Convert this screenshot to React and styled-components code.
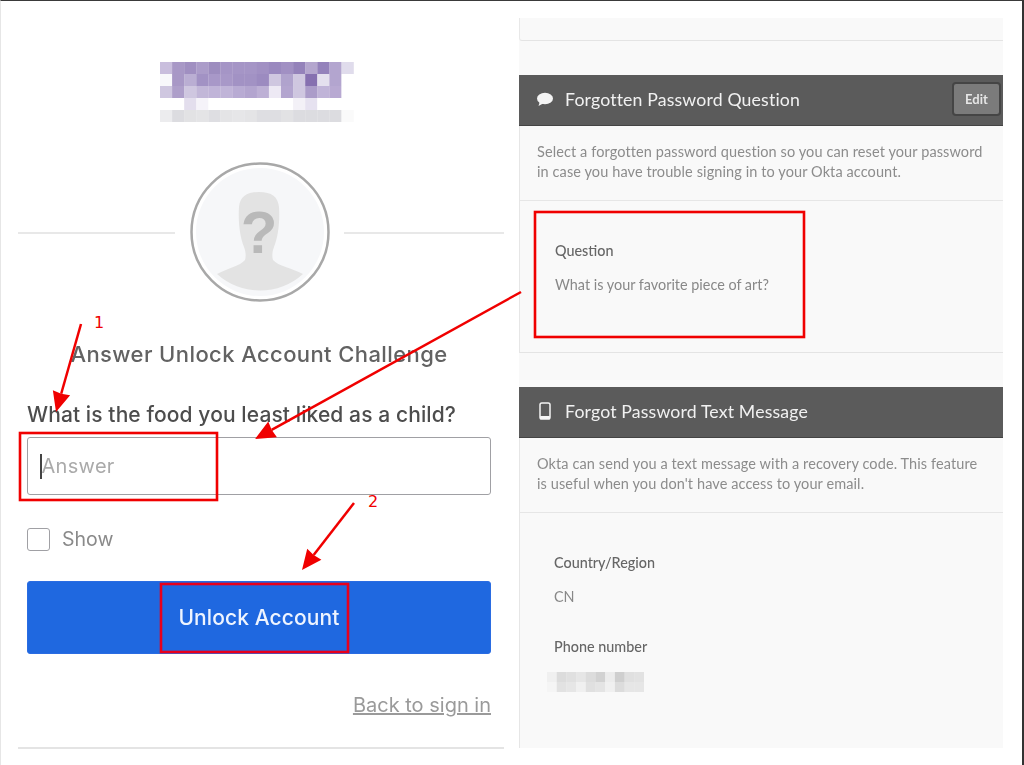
import React from "react";
import styled, { createGlobalStyle } from "styled-components";

const GlobalStyle = createGlobalStyle`
  html, body {
    margin: 0;
    padding: 0;
    background: #fff;
  }
  * {
    box-sizing: border-box;
  }
`;

const Page = styled.div`
  position: relative;
  width: 1024px;
  height: 765px;
  overflow: hidden;
  display: flex;
  background: #fff;
  border-top: 1px solid #3a3a3a;
  border-right: 2px solid #333;
  border-left: 1px solid #e6e6e6;
`;

const LeftColumn = styled.div`
  width: 518px;
  flex: none;
  padding: 0 15px 0 17px;
  display: flex;
  flex-direction: column;
  font-family: "Inter", "Liberation Sans", sans-serif;
  filter: blur(0.5px);
`;

const Logo = styled.svg`
  display: block;
  width: 194px;
  height: 60px;
  margin: 61px 0 0 142px;
`;

const AvatarRow = styled.div`
  display: flex;
  align-items: center;
  justify-content: space-between;
  margin-top: 40px;
`;

const Rule = styled.div`
  width: ${(props) => props.$width}px;
  height: 2px;
  margin-top: 2px;
  background: #e8e8e8;
`;

const Avatar = styled.svg`
  display: block;
  width: 140px;
  height: 140px;
`;

const Form = styled.div`
  padding: 0 13px 0 9px;
  display: flex;
  flex-direction: column;
`;

const Title = styled.h2`
  margin: 40px 0 0;
  font-size: 22px;
  line-height: 24px;
  font-weight: 500;
  text-align: center;
  color: #626262;
  letter-spacing: 0.4px;
  white-space: nowrap;
`;

const QuestionLabel = styled.label`
  margin-top: 37px;
  font-size: 21px;
  line-height: 24px;
  font-weight: 500;
  color: #4d4d4d;
  letter-spacing: 0.1px;
  white-space: nowrap;
`;

const AnswerBox = styled.div`
  margin-top: 10px;
  height: 58px;
  display: flex;
  align-items: center;
  padding-left: 12px;
  border: 1px solid #a0a0a4;
  border-radius: 3px;
  font-size: 20px;
  color: #aaa;
  letter-spacing: 0.3px;
`;

const Caret = styled.span`
  width: 1.5px;
  height: 25px;
  background: #444;
`;

const ShowRow = styled.div`
  margin-top: 33px;
  height: 23px;
  display: flex;
  align-items: center;
  gap: 12px;
  font-size: 19.5px;
  line-height: 23px;
  color: #8a8a8a;
`;

const CheckBox = styled.span`
  width: 23px;
  height: 23px;
  background: #fff;
  border: 1px solid #a0a0a4;
  border-radius: 3px;
`;

const SubmitButton = styled.button`
  margin-top: 30px;
  height: 73px;
  border: 1px solid #2a6ce2;
  border-radius: 3px;
  background: #1f68e0;
  color: #eef4ff;
  font-family: inherit;
  font-size: 21px;
  font-weight: 500;
  letter-spacing: 0.1px;
`;

const BackLink = styled.a`
  margin-top: 39px;
  align-self: flex-end;
  font-size: 20px;
  line-height: 24px;
  color: #9a9a9a;
  text-decoration: underline;
`;

const BottomRule = styled.div`
  margin-top: 30px;
  height: 2px;
  background: #e4e4e4;
`;

const RightPanel = styled.div`
  width: 484px;
  height: 730px;
  flex: none;
  margin-top: 17px;
  display: flex;
  flex-direction: column;
  background: #f9f9f9;
  font-family: "Lato", "Liberation Sans", sans-serif;
  filter: blur(0.5px);
`;

const Stub = styled.div`
  height: 23px;
  flex: none;
  border-left: 1px solid #e8e8e8;
  border-bottom: 1px solid #e4e4e4;
  border-bottom-left-radius: 3px;
`;

const Card = styled.section`
  flex: ${(props) => (props.$grow ? 1 : "none")};
  margin-top: 34px;
  border-left: 1px solid #e6e6e6;
  border-bottom: ${(props) => (props.$grow ? "none" : "1px solid #e4e4e4")};
`;

const CardHeader = styled.header`
  height: 51px;
  margin-left: -1px;
  display: flex;
  align-items: center;
  padding: 0 2px 2px 18px;
  background: #5b5b5b;
  border-bottom: 1px solid #444;
  color: #f1f1f1;
`;

const HeaderIcon = styled.svg`
  display: block;
  width: 16px;
  height: 18px;
  margin-right: 12px;
  flex: none;
`;

const HeaderTitle = styled.h3`
  flex: 1;
  margin: 0;
  font-size: 17.7px;
  font-weight: 400;
  letter-spacing: 0.15px;
`;

const EditButton = styled.button`
  width: 49px;
  height: 34px;
  padding: 0;
  background: #7b7b7b;
  border: 2px solid #454545;
  border-radius: 4px;
  color: #e6e6e6;
  font-family: inherit;
  font-size: 13px;
  font-weight: 700;
`;

const Description = styled.p`
  margin: 0;
  height: 75px;
  padding: 16px 0 0 17px;
  border-bottom: 1px solid #e6e6e6;
  font-size: 14.5px;
  line-height: 20px;
  letter-spacing: 0.1px;
  color: #8c8c8c;
  white-space: nowrap;
`;

const Details = styled.div`
  padding: 40px 0 ${(props) => props.$bottom}px ${(props) => props.$left}px;
`;

const FieldName = styled.div`
  margin-top: ${(props) => props.$top || 0}px;
  font-size: 14.4px;
  line-height: 20px;
  font-weight: 500;
  color: #666;
`;

const FieldValue = styled.div`
  margin-top: 14px;
  font-size: 14.4px;
  line-height: 20px;
  color: #888;
`;

const MaskedPhone = styled.svg`
  display: block;
  width: 97px;
  height: 20px;
  margin: 15px 0 0 -7px;
`;

const Annotations = styled.svg`
  position: absolute;
  top: -1px;
  left: -1px;
  width: 1024px;
  height: 765px;
  pointer-events: none;
`;

const StepNumber = styled.span`
  position: absolute;
  left: ${(props) => props.$x}px;
  top: ${(props) => props.$y}px;
  font-family: "DejaVu Sans", sans-serif;
  font-size: 16px;
  line-height: 18px;
  color: #f00000;
`;

const logoRows = [
  ["c9bedd", "a898c6", "a08fc1", "ab9cc9", "9d8dbf", "a595c6", "a595c6", "a595c6", "a190c3", "9a89bf", "a190c3", "9482ba", "b4a6ce", "9482bb", "b3a5cf", "e0dcec"],
  ["f8f8fb", "a898c6", "baaed3", "a292c4", "a898c8", "a898c8", "a292c4", "a292c4", "9c8bc0", "cfc7e0", "b0a3cd", "cfc7e0", "8670b0", "e4e0ee", "b3a5cf", "ffffff"],
  ["cfc7e0", "ae9fca", "cfc7e0", "c2b7d8", "c0b4d8", "c0b4d8", "b8abd3", "b3a5cf", "bdb0d5", "ede9f4", "b3a5cf", "cfc7e0", "ab9cc9", "c0b4d8", "b8a9d2", "ffffff"],
  ["ffffff", "ffffff", "e3deed", "f5f3f9", "ffffff", "ffffff", "ffffff", "ffffff", "ffffff", "ffffff", "ffffff", "f3f1f7", "e6e2f0", "ffffff", "ffffff", "ffffff"],
  ["ececee", "dcdce0", "e2e2e4", "e4e4e6", "dedee2", "e4e4e6", "e6e6e8", "e4e4e6", "dedee2", "dedee2", "e2e2e4", "dcdce0", "dcdce0", "dcdce0", "dcdce0", "fafafa"],
];

const phoneRows = [
  ["f0f0f0", "dcdcdc", "e0e0e0", "e6e6e6", "dcdcdc", "d2d2d2", "ececec", "cfcfcf", "e0e0e0", "e2e2e2"],
  ["f5f5f5", "e2e2e2", "e6e6e6", "f0f0f0", "e0e0e0", "e4e4e4", "f0f0f0", "dcdcdc", "e6e6e6", "e6e6e6"],
];

const PixelCells = ({ rows, cellWidth, cellHeight }) =>
  rows.flatMap((row, y) =>
    row.map((color, x) => (
      <rect
        key={`${x}-${y}`}
        x={x * cellWidth}
        y={y * cellHeight}
        width={cellWidth + 0.2}
        height={cellHeight + 0.2}
        fill={`#${color}`}
      />
    ))
  );

const Arrow = ({ x1, y1, x2, y2 }) => {
  const angle = Math.atan2(y2 - y1, x2 - x1);
  const size = 22;
  const spread = 0.42;
  const ax = x2 - size * Math.cos(angle - spread);
  const ay = y2 - size * Math.sin(angle - spread);
  const bx = x2 - size * Math.cos(angle + spread);
  const by = y2 - size * Math.sin(angle + spread);
  const neckX = x2 - (size - 3) * Math.cos(angle);
  const neckY = y2 - (size - 3) * Math.sin(angle);
  return (
    <g>
      <line x1={x1} y1={y1} x2={neckX} y2={neckY} stroke="#f00000" strokeWidth="2.5" />
      <polygon points={`${x2},${y2} ${ax},${ay} ${neckX},${neckY} ${bx},${by}`} fill="#f00000" />
    </g>
  );
};

const App = () => (
  <>
    <GlobalStyle />
    <Page>
      <LeftColumn>
        <Logo viewBox="0 0 194 60">
          <PixelCells rows={logoRows} cellWidth={12.1} cellHeight={12} />
        </Logo>
        <AvatarRow>
          <Rule $width={157} />
          <Avatar viewBox="0 0 140 140">
            <circle cx="70" cy="70" r="68.5" fill="#fff" stroke="#a8a8a8" strokeWidth="2.5" />
            <circle cx="70" cy="70" r="64" fill="#f6f7f9" />
            <path
              d="M69 30C56 30 50 35 49 45C48 60 50 75 54 85C56 90 56 95 55 98C50 104 38 106 27 112A64 64 0 0 0 113 112C102 106 88 104 83 98C82 95 82 90 84 85C88 75 90 60 89 45C88 35 82 30 69 30Z"
              fill="#e3e3e3"
            />
            <text
              x="69"
              y="91"
              textAnchor="middle"
              fontFamily="Liberation Sans, sans-serif"
              fontWeight="700"
              fontSize="60"
              fill="#b9b9b9"
            >
              ?
            </text>
          </Avatar>
          <Rule $width={160} />
        </AvatarRow>
        <Form>
          <Title>Answer Unlock Account Challenge</Title>
          <QuestionLabel>What is the food you least liked as a child?</QuestionLabel>
          <AnswerBox>
            <Caret />
            Answer
          </AnswerBox>
          <ShowRow>
            <CheckBox />
            Show
          </ShowRow>
          <SubmitButton>Unlock Account</SubmitButton>
          <BackLink href="#">Back to sign in</BackLink>
        </Form>
        <BottomRule />
      </LeftColumn>

      <RightPanel>
        <Stub />
        <Card>
          <CardHeader>
            <HeaderIcon viewBox="0 0 16 18">
              <ellipse cx="8" cy="8.5" rx="8" ry="5.8" fill="#f4f4f4" />
              <path d="M3 11L1.5 16L7 13Z" fill="#f4f4f4" />
            </HeaderIcon>
            <HeaderTitle>Forgotten Password Question</HeaderTitle>
            <EditButton>Edit</EditButton>
          </CardHeader>
          <Description>
            Select a forgotten password question so you can reset your password
            <br />
            in case you have trouble signing in to your Okta account.
          </Description>
          <Details $left={35} $bottom={57}>
            <FieldName>Question</FieldName>
            <FieldValue>What is your favorite piece of art?</FieldValue>
          </Details>
        </Card>
        <Card $grow>
          <CardHeader>
            <HeaderIcon viewBox="0 0 16 18">
              <rect x="3" y="1" width="10" height="16" rx="1.8" fill="none" stroke="#f4f4f4" strokeWidth="1.5" />
              <rect x="3" y="14" width="10" height="3" rx="1" fill="#f4f4f4" />
            </HeaderIcon>
            <HeaderTitle>Forgot Password Text Message</HeaderTitle>
          </CardHeader>
          <Description>
            Okta can send you a text message with a recovery code. This feature
            <br />
            is useful when you don't have access to your email.
          </Description>
          <Details $left={34} $bottom={0}>
            <FieldName>Country/Region</FieldName>
            <FieldValue>CN</FieldValue>
            <FieldName $top={30}>Phone number</FieldName>
            <MaskedPhone viewBox="0 0 97 20">
              <PixelCells rows={phoneRows} cellWidth={9.7} cellHeight={10} />
            </MaskedPhone>
          </Details>
        </Card>
      </RightPanel>

      <Annotations viewBox="0 0 1024 765">
        <rect x="20" y="433" width="197" height="67" fill="none" stroke="#f00000" strokeWidth="2.6" />
        <rect x="161" y="584" width="187" height="68" fill="none" stroke="#e8001c" strokeWidth="2.6" />
        <rect x="535" y="212" width="269" height="125" fill="none" stroke="#f00000" strokeWidth="2.6" />
        <Arrow x1={81} y1={324} x2={56} y2={412} />
        <Arrow x1={521} y1={292} x2={255} y2={439} />
        <Arrow x1={354} y1={503} x2={302} y2={570} />
      </Annotations>
      <StepNumber $x={93} $y={313}>1</StepNumber>
      <StepNumber $x={367} $y={492}>2</StepNumber>
    </Page>
  </>
);

export default App;
